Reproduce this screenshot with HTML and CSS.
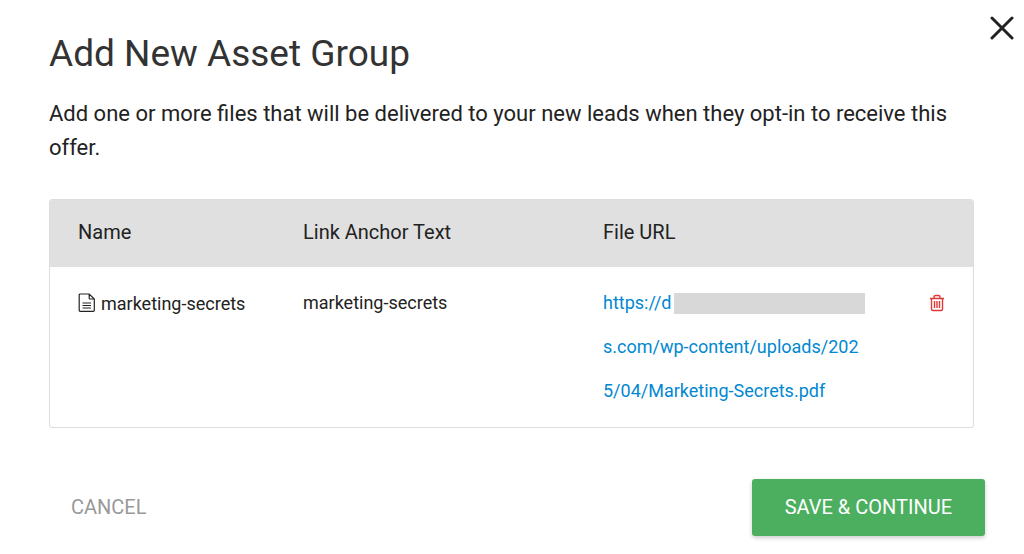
FILE: index.html
```html
<!DOCTYPE html>
<html lang="en">
<head>
<meta charset="utf-8">
<meta name="viewport" content="width=device-width, initial-scale=1">
<title>Add New Asset Group</title>
<link rel="stylesheet" href="styles.css">
</head>
<body>
<main class="dialog">
  <button class="close" type="button" aria-label="Close">
    <svg width="24" height="24" viewBox="0 0 24 24" aria-hidden="true"><path d="M2 2l20 20M22 2L2 22" fill="none" stroke="#222" stroke-width="3" stroke-linecap="round"/></svg>
  </button>
  <h1 class="title">Add New Asset Group</h1>
  <p class="intro">Add one or more files that will be delivered to your new leads when they opt-in to receive this offer.</p>
  <div class="panel">
    <table class="assets">
      <thead>
        <tr><th class="col-name">Name</th><th class="col-anchor">Link Anchor Text</th><th class="col-url">File URL</th><th class="col-action"></th></tr>
      </thead>
      <tbody>
        <tr>
          <td class="name"><span class="file"><svg class="file-icon" width="18" height="20" viewBox="0 0 18 20" aria-hidden="true"><path d="M2.2 1H11.2L16.3 6V17.3Q16.3 18.3 15.3 18.3H2.2Q1.2 18.3 1.2 17.3V2Q1.2 1 2.2 1ZM11.2 1V5.2Q11.2 6 12 6H16.3M4.5 10h8.5M4.5 12.5h8.5M4.5 15h8.5" fill="none" stroke="#222" stroke-width="1.2"/></svg>marketing-secrets</span></td>
          <td>marketing-secrets</td>
          <td><a class="url" href="#">https://d<span class="redacted"></span><br>s.com/wp-content/uploads/202<br>5/04/Marketing-Secrets.pdf</a></td>
          <td class="action"><button class="delete" type="button" aria-label="Delete"><svg width="16" height="18" viewBox="0 0 16 18" aria-hidden="true"><path d="M1 4.5h14M5 4.5V3Q5 1.5 6.5 1.5h3Q11 1.5 11 3v1.5M2.5 4.5v10.500Q2.500 16.500 4 16.500h8Q13.500 16.500 13.500 15V4.500M5.500 7v7M8 7v7M10.500 7v7" fill="none" stroke="#db3a36" stroke-width="1.400"/></svg></button></td>
        </tr>
      </tbody>
    </table>
  </div>
  <footer class="actions">
    <button class="cancel" type="button">CANCEL</button>
    <button class="save" type="button">SAVE &amp; CONTINUE</button>
  </footer>
</main>
</body>
</html>
```
FILE: styles.css
```css
* { box-sizing: border-box; }
body { margin: 0; background: #fff; color: #222; font-family: Roboto, sans-serif; }
button { border: 0; padding: 0; background: none; font-family: inherit; cursor: pointer; }
svg { display: block; }
.dialog { position: relative; padding: 30px 50px 16px 49px; }
.close { position: absolute; top: 16px; right: 10px; }
.title { margin: 0; font-size: 37px; line-height: 48px; font-weight: 400; color: #333; }
.intro { margin: 19px 0 34px; font-size: 22px; line-height: 34px; }
.panel { border: 1px solid #ddd; border-radius: 3px; overflow: hidden; }
.assets { width: 100%; table-layout: fixed; border-collapse: collapse; text-align: left; }
.assets th { height: 67px; padding: 0 0 4px 28px; background: #e0e0e0; font-size: 20px; font-weight: 400; }
.assets td { padding: 14px 0 14px 28px; font-size: 18px; line-height: 44px; vertical-align: top; white-space: nowrap; }
.assets .name { padding-top: 15px; }
.assets .col-name { width: 225px; }
.assets .col-anchor { width: 300px; }
.assets .col-action { width: 72px; }
.file { display: flex; align-items: center; gap: 5px; }
.file-icon { margin-bottom: 2px; }
.url { color: #0288d1; text-decoration: none; }
.redacted { display: inline-block; width: 191px; height: 21px; margin: 0 0 2px 3px; background: #d8d8d8; vertical-align: middle; }
.delete { display: flex; align-items: center; height: 44px; }
.actions { display: flex; align-items: center; justify-content: space-between; margin: 51px -11px 0 22px; }
.cancel { padding-bottom: 2px; font-size: 20px; color: #999; }
.save { height: 57px; padding: 0 33px 2px; border-radius: 3px; background: #4caf60; color: #fff; font-size: 20px; box-shadow: 0 2px 4px rgba(0, 0, 0, .2); }
```
